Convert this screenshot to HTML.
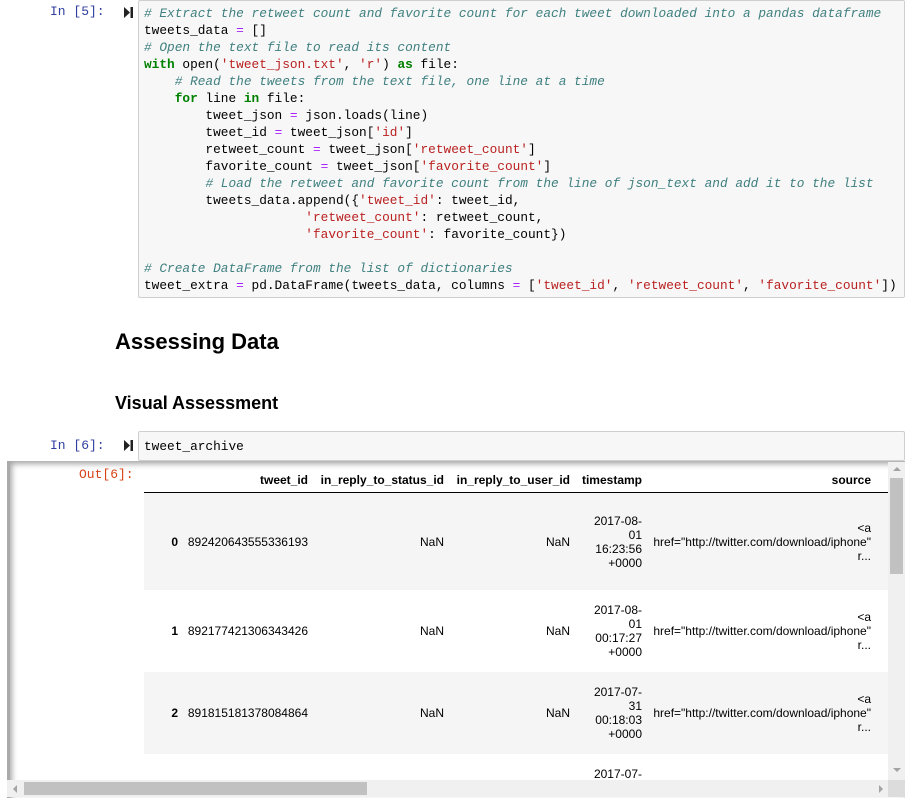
<!DOCTYPE html>
<html><head><meta charset="utf-8"><style>
*{margin:0;padding:0;box-sizing:border-box}
body{width:923px;height:811px;background:#fff;position:relative;overflow:hidden;font-family:"Liberation Sans",Arial,sans-serif}
.p{color:#303f9f;font-family:"Liberation Mono",monospace;font-size:13px;position:absolute}
.run{position:absolute;width:9px;height:11px}
.code{position:absolute;left:138px;background:#f7f7f7;border:1px solid #cfcfcf;border-radius:2px}
pre{font-family:"Liberation Mono",monospace;font-size:12.8px;line-height:17px;color:#000;padding-left:5px}
.c{color:#408080;font-style:italic}.k{color:#008000;font-weight:bold}.s{color:#ba2121}.o{color:#aa22ff}
.a{position:absolute;font-size:12px;color:#000;line-height:14px;text-align:right}
.b{font-weight:bold}
.row{position:absolute;left:144px;width:744px}
</style></head><body>
<div class="p" style="left:50px;top:4px">In [5]:</div>
<svg class="run" style="left:124px;top:7px" viewBox="0 0 9 11"><path d="M0 0L6 5.5L0 11Z" fill="#222"/><rect x="6.5" y="0" width="2.5" height="11" fill="#222"/></svg>
<div class="code" style="top:0;width:767px;height:298px"><pre style="padding-top:4px"><span class="c"># Extract the retweet count and favorite count for each tweet downloaded into a pandas dataframe</span>
tweets_data <span class="o">=</span> []
<span class="c"># Open the text file to read its content</span>
<span class="k">with</span> open(<span class="s">'tweet_json.txt'</span>, <span class="s">'r'</span>) <span class="k">as</span> file:
    <span class="c"># Read the tweets from the text file, one line at a time</span>
    <span class="k">for</span> line <span class="k">in</span> file:
        tweet_json <span class="o">=</span> json.loads(line)
        tweet_id <span class="o">=</span> tweet_json[<span class="s">'id'</span>]
        retweet_count <span class="o">=</span> tweet_json[<span class="s">'retweet_count'</span>]
        favorite_count <span class="o">=</span> tweet_json[<span class="s">'favorite_count'</span>]
        <span class="c"># Load the retweet and favorite count from the line of json_text and add it to the list</span>
        tweets_data.append({<span class="s">'tweet_id'</span>: tweet_id,
                     <span class="s">'retweet_count'</span>: retweet_count,
                     <span class="s">'favorite_count'</span>: favorite_count})

<span class="c"># Create DataFrame from the list of dictionaries</span>
tweet_extra <span class="o">=</span> pd.DataFrame(tweets_data, columns <span class="o">=</span> [<span class="s">'tweet_id'</span>, <span class="s">'retweet_count'</span>, <span class="s">'favorite_count'</span>])</pre></div>

<div style="position:absolute;left:115px;top:329px;font-size:22px;font-weight:bold">Assessing Data</div>
<div style="position:absolute;left:115px;top:393px;font-size:18px;font-weight:bold">Visual Assessment</div>

<div class="p" style="left:50px;top:438px">In [6]:</div>
<svg class="run" style="left:124px;top:440px" viewBox="0 0 9 11"><path d="M0 0L6 5.5L0 11Z" fill="#222"/><rect x="6.5" y="0" width="2.5" height="11" fill="#222"/></svg>
<div class="code" style="top:431px;width:767px;height:30px"><pre style="padding-top:6px">tweet_archive</pre></div>

<div style="position:absolute;left:7px;top:461px;width:898px;height:337px;border-left:3px solid #aaa;box-shadow:inset 2px 3px 6px rgba(0,0,0,.35);overflow:hidden">
</div>
<div class="p" style="left:79px;top:467px;color:#d84315">Out[6]:</div>

<div class="a b" style="left:180px;width:128px;top:473px">tweet_id</div>
<div class="a b" style="left:310px;width:134px;top:473px">in_reply_to_status_id</div>
<div class="a b" style="left:450px;width:120px;top:473px">in_reply_to_user_id</div>
<div class="a b" style="left:575px;width:67px;top:473px">timestamp</div>
<div class="a b" style="left:650px;width:221px;top:473px">source</div>
<div style="position:absolute;left:144px;top:492px;width:744px;height:1px;background:#000"></div>

<div class="row" style="top:493px;height:97px;background:#f5f5f5"></div>
<div class="row" style="top:672px;height:82px;background:#f5f5f5"></div>

<div class="a b" style="left:150px;width:28px;top:535px">0</div>
<div class="a" style="left:180px;width:128px;top:535px">892420643555336193</div>
<div class="a" style="left:310px;width:134px;top:535px">NaN</div>
<div class="a" style="left:450px;width:120px;top:535px">NaN</div>
<div class="a" style="left:575px;width:67px;top:514px">2017-08-<br>01<br>16:23:56<br>+0000</div>
<div class="a" style="left:650px;width:221px;top:521px">&lt;a<br>href="http://twitter.com/download/iphone"<br>r...</div>

<div class="a b" style="left:150px;width:28px;top:624px">1</div>
<div class="a" style="left:180px;width:128px;top:624px">892177421306343426</div>
<div class="a" style="left:310px;width:134px;top:624px">NaN</div>
<div class="a" style="left:450px;width:120px;top:624px">NaN</div>
<div class="a" style="left:575px;width:67px;top:603px">2017-08-<br>01<br>00:17:27<br>+0000</div>
<div class="a" style="left:650px;width:221px;top:610px">&lt;a<br>href="http://twitter.com/download/iphone"<br>r...</div>

<div class="a b" style="left:150px;width:28px;top:706px">2</div>
<div class="a" style="left:180px;width:128px;top:706px">891815181378084864</div>
<div class="a" style="left:310px;width:134px;top:706px">NaN</div>
<div class="a" style="left:450px;width:120px;top:706px">NaN</div>
<div class="a" style="left:575px;width:67px;top:685px">2017-07-<br>31<br>00:18:03<br>+0000</div>
<div class="a" style="left:650px;width:221px;top:692px">&lt;a<br>href="http://twitter.com/download/iphone"<br>r...</div>

<div class="a" style="left:575px;width:67px;top:767px">2017-07-</div>

<!-- vertical scrollbar -->
<div style="position:absolute;left:888px;top:462px;width:17px;height:318px;background:#f0f0f0"></div>
<div style="position:absolute;left:890px;top:478px;width:13px;height:96px;background:#c1c1c1"></div>
<div style="position:absolute;left:893px;top:467px;width:0;height:0;border:4px solid transparent;border-bottom-color:#a3a3a3;border-top:0"></div>
<div style="position:absolute;left:893px;top:768px;width:0;height:0;border:4px solid transparent;border-top-color:#a3a3a3;border-bottom:0"></div>
<!-- horizontal scrollbar -->
<div style="position:absolute;left:7px;top:780px;width:881px;height:17px;background:#f0f0f0"></div>
<div style="position:absolute;left:24px;top:782px;width:343px;height:13px;background:#c1c1c1"></div>
<div style="position:absolute;left:13px;top:785px;width:0;height:0;border:4px solid transparent;border-right-color:#a3a3a3;border-left:0"></div>
<div style="position:absolute;left:879px;top:785px;width:0;height:0;border:4px solid transparent;border-left-color:#a3a3a3;border-right:0"></div>
<div style="position:absolute;left:888px;top:780px;width:17px;height:17px;background:#dcdcdc"></div>
</body></html>
